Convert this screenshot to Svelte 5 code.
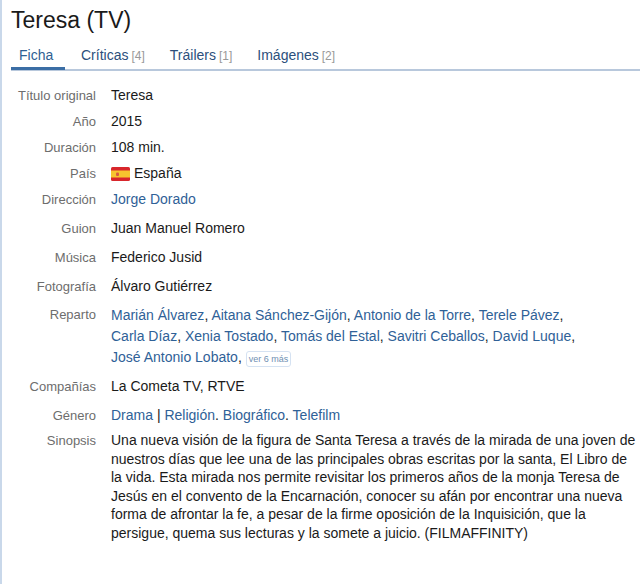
<script>
  const tabs = [
    { name: 'Ficha', count: null },
    { name: 'Críticas', count: 4 },
    { name: 'Tráilers', count: 1 },
    { name: 'Imágenes', count: 2 }
  ];
  const cast = [
    ['Marián Álvarez', 'Aitana Sánchez-Gijón', 'Antonio de la Torre', 'Terele Pávez'],
    ['Carla Díaz', 'Xenia Tostado', 'Tomás del Estal', 'Savitri Ceballos', 'David Luque'],
    ['José Antonio Lobato']
  ];
  const synopsis = [
    'Una nueva visión de la figura de Santa Teresa a través de la mirada de una joven de',
    'nuestros días que lee una de las principales obras escritas por la santa, El Libro de',
    'la vida. Esta mirada nos permite revisitar los primeros años de la monja Teresa de',
    'Jesús en el convento de la Encarnación, conocer su afán por encontrar una nueva',
    'forma de afrontar la fe, a pesar de la firme oposición de la Inquisición, que la',
    'persigue, quema sus lecturas y la somete a juicio. (FILMAFFINITY)'
  ];
</script>

<div class="page">
  <h1>Teresa (TV)</h1>

  <nav class="tabs">
    {#each tabs as tab, i}
      <a href="#top" class:active={i === 0}>{tab.name}{#if tab.count}<span class="count">[{tab.count}]</span>{/if}</a>
    {/each}
  </nav>

  <dl class="sheet">
    <div class="row short"><dt>Título original</dt><dd>Teresa</dd></div>
    <div class="row short"><dt>Año</dt><dd>2015</dd></div>
    <div class="row short"><dt>Duración</dt><dd>108 min.</dd></div>
    <div class="row short">
      <dt>País</dt>
      <dd class="country">
        <svg width="19" height="14" viewBox="0 0 19 14" aria-hidden="true">
          <rect width="19" height="14" rx="1.5" fill="#d8262c" />
          <rect y="3.5" width="19" height="7" fill="#f7c52e" />
          <rect x="5" y="5.5" width="3" height="3.5" rx="1" fill="#d9583f" />
        </svg>
        España
      </dd>
    </div>
    <div class="row"><dt>Dirección</dt><dd><a href="#top">Jorge Dorado</a></dd></div>
    <div class="row"><dt>Guion</dt><dd>Juan Manuel Romero</dd></div>
    <div class="row"><dt>Música</dt><dd>Federico Jusid</dd></div>
    <div class="row photo"><dt>Fotografía</dt><dd>Álvaro Gutiérrez</dd></div>
    <div class="row reparto">
      <dt>Reparto</dt>
      <dd class="cast">
        {#each cast as line}
          <div>
            {#each line as person}
              <a href="#top">{person}</a>,{' '}
            {/each}
            {#if line.length === 1}<button type="button">ver 6 más</button>{/if}
          </div>
        {/each}
      </dd>
    </div>
    <div class="row"><dt>Compañías</dt><dd>La Cometa TV, RTVE</dd></div>
    <div class="row genre"><dt>Género</dt><dd><a href="#top">Drama</a> | <a href="#top">Religión</a>. <a href="#top">Biográfico</a>. <a href="#top">Telefilm</a></dd></div>
    <div class="row synopsis">
      <dt>Sinopsis</dt>
      <dd>
        {#each synopsis as line}
          <div>{line}</div>
        {/each}
      </dd>
    </div>
  </dl>
</div>

<style>
  :global(body) {
    background: #fff;
    font-family: "Liberation Sans", Arial, sans-serif;
  }

  .page {
    height: 584px;
    box-sizing: border-box;
    border-left: 2px solid #c9d8ea;
    overflow: hidden;
    color: #1a1a1a;
    font-size: 14px;
  }

  h1 {
    margin: 0;
    padding: 7px 0 0 9px;
    font-size: 23px;
    line-height: 26px;
    font-weight: 400;
  }

  .tabs {
    display: flex;
    margin: 10px 0 0 9px;
    height: 26px;
    border-bottom: 2px solid #b8c8dc;
  }
  .tabs a {
    height: 26px;
    box-sizing: border-box;
    padding: 2px 0 0;
    margin-right: 25px;
    line-height: 20px;
    color: #2c4f7c;
    text-decoration: none;
    font-size: 14px;
    white-space: nowrap;
  }
  .tabs a.active {
    width: 54px;
    height: 27px;
    padding-left: 8px;
    margin-right: 16px;
    color: #2f5f93;
    border-bottom: 3px solid #3b6ea5;
  }
  .count {
    margin-left: 3px;
    color: #999;
    font-size: 12px;
  }

  .sheet {
    margin: 15px 0 0;
    line-height: 19px;
  }
  .row {
    display: grid;
    grid-template-columns: 94px 1fr;
    column-gap: 15px;
    margin-bottom: 10px;
  }
  .row.short { margin-bottom: 7px; }
  .row.photo { margin-bottom: 9px; }
  .row.reparto { margin-bottom: 9px; }
  dt {
    text-align: right;
    color: #6d6d6d;
    font-size: 13px;
  }
  dd { margin: 0; }
  dd a {
    color: #2f6197;
    text-decoration: none;
  }
  .country {
    display: flex;
    align-items: center;
    gap: 4px;
  }
  .cast { line-height: 21px; }
  button {
    padding: 0 2px;
    border: 1px solid #d5e2f2;
    border-radius: 3px;
    background: #fff;
    color: #6f8fb2;
    font: 9px/14px "Liberation Sans", Arial, sans-serif;
  }
  .genre { margin-bottom: 6px; }
  .synopsis { margin-bottom: 0; }
  .synopsis dd {
    line-height: 18.6px;
    white-space: nowrap;
  }
</style>
